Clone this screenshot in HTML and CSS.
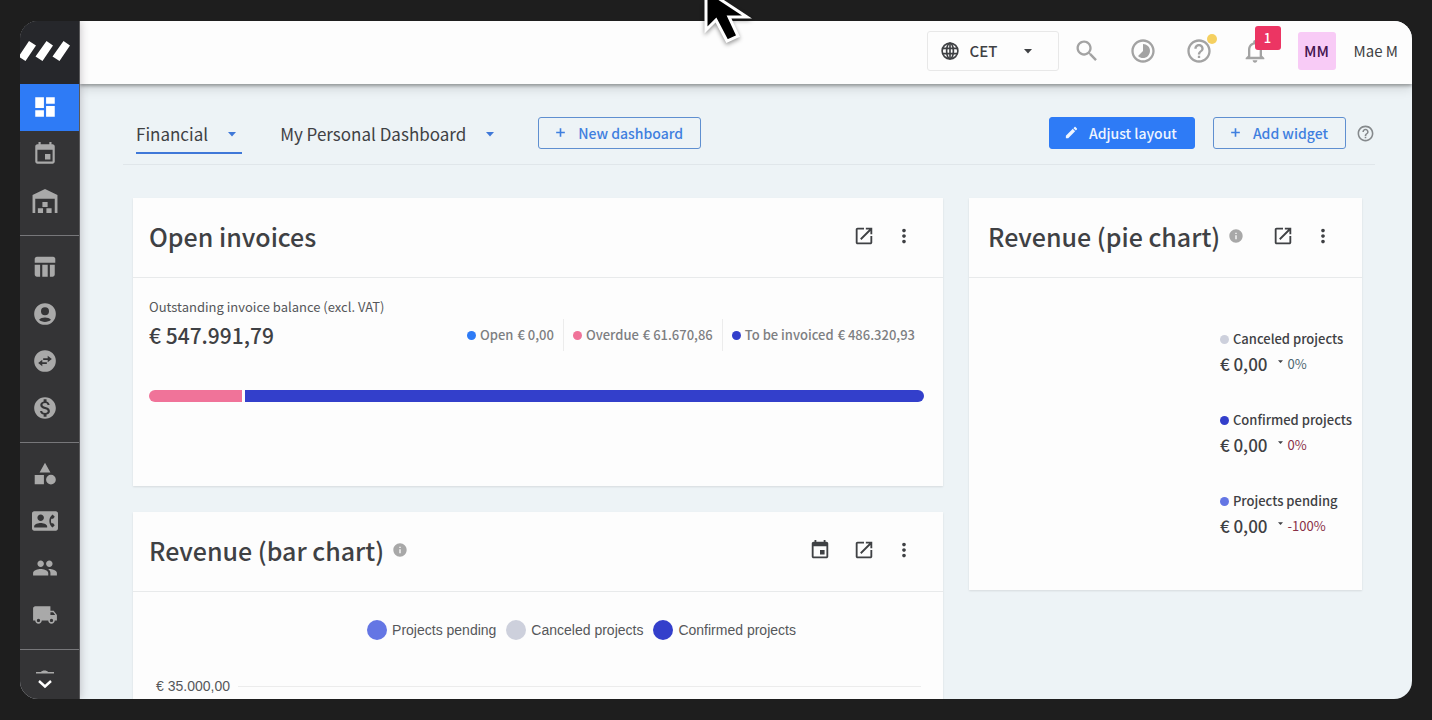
FILE: index.html
```html
<!DOCTYPE html>
<html lang="en">
<head>
    <meta charset="UTF-8">
    <meta name="viewport" content="width=device-width, initial-scale=1.0">
    <title>Dashboard</title>
    <link rel="stylesheet" href="styles.css">
</head>
<body>
    <!-- Icon sprite -->
    <svg class="sprite" aria-hidden="true">
        <symbol id="i-dashboard" viewBox="0 0 24 24"><path d="M3 13h8V3H3v10zm0 8h8v-6H3v6zm10 0h8V11h-8v10zm0-18v6h8V3h-8z"/></symbol>
        <symbol id="i-event" viewBox="0 0 24 24"><path d="M17 12h-5v5h5v-5zM16 1v2H8V1H6v2H5c-1.11 0-1.99.9-1.99 2L3 19c0 1.1.89 2 2 2h14c1.1 0 2-.9 2-2V5c0-1.1-.9-2-2-2h-1V1h-2zm3 18H5V8h14v11z"/></symbol>
        <symbol id="i-warehouse" viewBox="0 0 24 24"><path d="M.5 23V6.500L12 1l11.500 5.500V23H21V10H3v13zM9.600 13h4.800v4.600H9.600zM5.400 18.700h4.800V23H5.400zM13.300 18.700h4.800V23h-4.800z"/></symbol>
        <symbol id="i-table" viewBox="0 0 24 24"><path d="M9.500 10h5v11h-5zM16.500 21H19c1.100 0 2-.9 2-2v-9h-4.500zM19.500 2.500h-15C3.400 2.500 2.500 3.400 2.500 4.500V8h19V4.500c0-1.100-.9-2-2-2zM2.500 19c0 1.100.9 2 2 2h3V10h-5z"/></symbol>
        <symbol id="i-account" viewBox="0 0 24 24"><path fill-rule="evenodd" d="M12 2a10 10 0 1 0 0 20 10 10 0 0 0 0-20zm0 3.700a3.700 3.700 0 1 1 0 7.400 3.700 3.700 0 0 1 0-7.400zM6.500 17.400c1.200-1.400 3.300-2.200 5.500-2.200s4.300.8 5.500 2.200c-1.300 1.300-3.300 2-5.500 2s-4.200-.7-5.500-2z"/></symbol>
        <symbol id="i-swap" viewBox="0 0 24 24"><path fill-rule="evenodd" d="M12 2a10 10 0 1 0 0 20 10 10 0 0 0 0-20zm2.500 5.200 3.800 3-3.800 3V11h-4.200V9.400h4.200zM9.500 10.900v2.200h4.200v1.600H9.500v2.200l-3.800-3z"/></symbol>
        <symbol id="i-money" viewBox="0 0 24 24"><path d="M12 2C6.480 2 2 6.480 2 12s4.480 10 10 10 10-4.480 10-10S17.520 2 12 2zm1.410 16.090V20h-2.670v-1.930c-1.710-.36-3.160-1.460-3.270-3.400h1.960c.1 1.050.82 1.870 2.650 1.870 1.960 0 2.400-.98 2.400-1.590 0-.83-.44-1.610-2.670-2.140-2.480-.6-4.180-1.620-4.180-3.670 0-1.720 1.390-2.840 3.110-3.210V4h2.670v1.950c1.860.45 2.790 1.860 2.850 3.390H14.300c-.05-1.110-.64-1.870-2.220-1.870-1.500 0-2.400.68-2.400 1.640 0 .84.65 1.390 2.670 1.910s4.180 1.390 4.180 3.910c-.01 1.830-1.380 2.830-3.120 3.160z"/></symbol>
        <symbol id="i-category" viewBox="0 0 24 24"><path d="M12 1.500 17 10.500H7zM2.500 13h8.500v8.500H2.500zM17.500 12.700a4.500 4.500 0 1 0 0 9 4.500 4.500 0 0 0 0-9z"/></symbol>
        <symbol id="i-contact" viewBox="0 0 24 24"><path d="M22 3H2C.9 3 0 3.900 0 5v14c0 1.100.9 2 2 2h20c1.100 0 1.990-.9 1.990-2L24 5c0-1.100-.9-2-2-2zM8 6c1.660 0 3 1.340 3 3s-1.340 3-3 3-3-1.340-3-3 1.340-3 3-3zm6 12H2v-1c0-2 4-3.100 6-3.100s6 1.100 6 3.100v1zm3.850-4h1.640L21 16l-1.990 1.990c-1.310-.98-2.280-2.380-2.730-3.990-.18-.64-.28-1.310-.28-2s.1-1.360.28-2c.45-1.620 1.420-3.010 2.730-3.990L21 8l-1.510 2h-1.640c-.22.63-.35 1.300-.35 2s.13 1.370.35 2z"/></symbol>
        <symbol id="i-group" viewBox="0 0 24 24"><path d="M16 11c1.660 0 2.990-1.340 2.990-3S17.660 5 16 5c-1.660 0-3 1.340-3 3s1.340 3 3 3zm-8 0c1.660 0 2.990-1.340 2.990-3S9.660 5 8 5C6.340 5 5 6.340 5 8s1.340 3 3 3zm0 2c-2.330 0-7 1.170-7 3.500V19h14v-2.500c0-2.330-4.670-3.500-7-3.500zm8 0c-.29 0-.62.02-.97.05 1.160.84 1.970 1.970 1.970 3.450V19h6v-2.500c0-2.330-4.670-3.500-7-3.500z"/></symbol>
        <symbol id="i-truck" viewBox="0 0 24 24"><path d="M20 8h-3V4H3c-1.100 0-2 .9-2 2v11h2c0 1.660 1.340 3 3 3s3-1.340 3-3h6c0 1.660 1.340 3 3 3s3-1.340 3-3h2v-5l-3-4zM6 18.500c-.83 0-1.500-.67-1.500-1.500s.67-1.500 1.500-1.500 1.500.67 1.500 1.500-.67 1.500-1.500 1.500zm13.500-9l1.960 2.500H17V9.500h2.500zm-1.500 9c-.83 0-1.500-.67-1.500-1.500s.67-1.500 1.500-1.500 1.500.67 1.500 1.500-.67 1.500-1.500 1.500z"/></symbol>
        <symbol id="i-open" viewBox="0 0 24 24"><path d="M19 19H5V5h7V3H5c-1.110 0-2 .9-2 2v14c0 1.100.89 2 2 2h14c1.100 0 2-.9 2-2v-7h-2v7zM14 3v2h3.590l-9.830 9.830 1.410 1.410L19 6.410V10h2V3h-7z"/></symbol>
        <symbol id="i-more" viewBox="0 0 24 24"><path d="M12 8c1.100 0 2-.9 2-2s-.9-2-2-2-2 .9-2 2 .9 2 2 2zm0 2c-1.100 0-2 .9-2 2s.9 2 2 2 2-.9 2-2-.9-2-2-2zm0 6c-1.100 0-2 .9-2 2s.9 2 2 2 2-.9 2-2-.9-2-2-2z"/></symbol>
        <symbol id="i-info" viewBox="0 0 24 24"><path d="M12 2C6.480 2 2 6.480 2 12s4.480 10 10 10 10-4.480 10-10S17.520 2 12 2zm1 15h-2v-6h2v6zm0-8h-2V7h2v2z"/></symbol>
        <symbol id="i-globe" viewBox="0 0 24 24"><g fill="none" stroke="currentColor" stroke-width="2.200"><circle cx="12" cy="12" r="10.500"/><ellipse cx="12" cy="12" rx="4.500" ry="10.500"/><path d="M2.500 8.500h19M2.500 15.500h19M12 2v20"/></g></symbol>
        <symbol id="i-search" viewBox="0 0 24 24"><path d="M15.500 14h-.79l-.28-.27C15.410 12.590 16 11.110 16 9.500 16 5.910 13.090 3 9.500 3S3 5.910 3 9.500 5.910 16 9.500 16c1.610 0 3.090-.59 4.230-1.570l.27.28v.79l5 4.990L20.490 19l-4.990-5zm-6 0C7.010 14 5 11.990 5 9.500S7.010 5 9.500 5 14 7.010 14 9.500 11.990 14 9.500 14z"/></symbol>
        <symbol id="i-timelapse" viewBox="0 0 24 24"><path d="M16.240 7.760C15.070 6.590 13.540 6 12 6v6l-4.240 4.240c2.340 2.340 6.140 2.340 8.490 0 2.340-2.340 2.340-6.140-.01-8.480zM12 2C6.480 2 2 6.480 2 12s4.480 10 10 10 10-4.480 10-10S17.520 2 12 2zm0 18c-4.420 0-8-3.580-8-8s3.580-8 8-8 8 3.580 8 8-3.580 8-8 8z"/></symbol>
        <symbol id="i-help" viewBox="0 0 24 24"><path d="M11 18h2v-2h-2v2zm1-16C6.480 2 2 6.480 2 12s4.480 10 10 10 10-4.480 10-10S17.520 2 12 2zm0 18c-4.410 0-8-3.590-8-8s3.590-8 8-8 8 3.590 8 8-3.590 8-8 8zm0-14c-2.210 0-4 1.790-4 4h2c0-1.100.9-2 2-2s2 .9 2 2c0 2-3 1.750-3 5h2c0-2.250 3-2.500 3-5 0-2.210-1.790-4-4-4z"/></symbol>
        <symbol id="i-bell" viewBox="0 0 24 24"><path d="M12 22c1.100 0 2-.9 2-2h-4c0 1.100.9 2 2 2zm6-6v-5c0-3.070-1.630-5.640-4.500-6.320V4c0-.83-.67-1.500-1.500-1.500s-1.500.67-1.500 1.500v.68C7.640 5.360 6 7.920 6 11v5l-2 2v1h16v-1l-2-2zm-2 1H8v-6c0-2.480 1.510-4.500 4-4.500s4 2.020 4 4.500v6z"/></symbol>
        <symbol id="i-edit" viewBox="0 0 24 24"><path d="M3 17.250V21h3.750L17.810 9.940l-3.750-3.750L3 17.250zM20.710 7.040c.39-.39.39-1.020 0-1.410l-2.340-2.340c-.39-.39-1.020-.39-1.410 0l-1.830 1.830 3.750 3.750 1.830-1.830z"/></symbol>
        <symbol id="i-plus" viewBox="0 0 24 24"><path d="M20 13.500h-6.500V20h-3v-6.500H4v-3h6.500V4h3v6.500H20z"/></symbol>
        <symbol id="i-caret" viewBox="0 0 8 8"><path d="M0 2h8L4 6.500z"/></symbol>
    </svg>

    <div class="app">
        <nav class="sidebar" aria-label="Main">
            <a href="#" class="logo" aria-label="Home">
                <svg viewBox="0 0 60 63"><path fill="#fff" d="M-1 35 9 20l7 4.500L5.500 40-1 36zM15.500 35.500 26.500 20l6.500 4.500L22.500 40zM32.500 35.500 43.500 20l6.500 4.500L39.500 40z"/></svg>
            </a>
            <div class="nav-group">
                <a href="#" class="nav-item active" aria-label="Dashboard"><svg class="icon"><use href="#i-dashboard"/></svg></a>
                <a href="#" class="nav-item" aria-label="Calendar"><svg class="icon"><use href="#i-event"/></svg></a>
                <a href="#" class="nav-item" aria-label="Warehouse"><svg class="icon"><use href="#i-warehouse"/></svg></a>
            </div>
            <div class="nav-group">
                <a href="#" class="nav-item" aria-label="Projects"><svg class="icon"><use href="#i-table"/></svg></a>
                <a href="#" class="nav-item" aria-label="Account"><svg class="icon"><use href="#i-account"/></svg></a>
                <a href="#" class="nav-item" aria-label="Subrent"><svg class="icon"><use href="#i-swap"/></svg></a>
                <a href="#" class="nav-item" aria-label="Invoices"><svg class="icon"><use href="#i-money"/></svg></a>
            </div>
            <div class="nav-group">
                <a href="#" class="nav-item" aria-label="Equipment"><svg class="icon"><use href="#i-category"/></svg></a>
                <a href="#" class="nav-item" aria-label="Contacts"><svg class="icon"><use href="#i-contact"/></svg></a>
                <a href="#" class="nav-item" aria-label="Crew"><svg class="icon"><use href="#i-group"/></svg></a>
                <a href="#" class="nav-item" aria-label="Vehicles"><svg class="icon"><use href="#i-truck"/></svg></a>
            </div>
            <button class="nav-more" aria-label="Scroll down">
                <svg viewBox="0 0 20 20"><path fill="#a9a9a9" d="M1 4.500V3h5c1-2 6-2 7 0h6v1.500z"/><path fill="none" stroke="#fff" stroke-width="2.400" d="m4 12 6 5.500 6-5.500"/></svg>
            </button>
        </nav>

        <div class="main">
            <header class="topbar">
                <label class="timezone">
                    <svg class="globe"><use href="#i-globe"/></svg>
                    <select aria-label="Timezone">
                        <option>CET</option>
                    </select>
                    <svg class="caret"><use href="#i-caret"/></svg>
                </label>
                <div class="tools">
                    <button class="tool" aria-label="Search"><svg><use href="#i-search"/></svg></button>
                    <button class="tool" aria-label="Time tracking"><svg><use href="#i-timelapse"/></svg></button>
                    <button class="tool" aria-label="Help"><svg><use href="#i-help"/></svg><span class="dot-new"></span></button>
                    <button class="tool" aria-label="Notifications"><svg><use href="#i-bell"/></svg><span class="badge">1</span></button>
                </div>
                <span class="avatar">MM</span>
                <span class="username">Mae M</span>
            </header>

            <div class="tabs">
                <a href="#" class="tab current">Financial <svg class="caret"><use href="#i-caret"/></svg></a>
                <a href="#" class="tab">My Personal Dashboard <svg class="caret"><use href="#i-caret"/></svg></a>
                <button class="btn"><svg class="plus"><use href="#i-plus"/></svg>New dashboard</button>
                <div class="tab-actions">
                    <button class="btn primary"><svg><use href="#i-edit"/></svg>Adjust layout</button>
                    <button class="btn"><svg class="plus"><use href="#i-plus"/></svg>Add widget</button>
                    <button class="help" aria-label="Help"><svg><use href="#i-help"/></svg></button>
                </div>
            </div>

            <main class="board">
                <div class="column">
                    <section class="card invoices">
                        <div class="card-header">
                            <h2>Open invoices</h2>
                            <div class="card-actions">
                                <button aria-label="Open"><svg><use href="#i-open"/></svg></button>
                                <button class="more" aria-label="More"><svg><use href="#i-more"/></svg></button>
                            </div>
                        </div>
                        <div class="card-body">
                            <div class="label">Outstanding invoice balance (excl. VAT)</div>
                            <div class="balance">
                                <div class="amount">€ 547.991,79</div>
                                <ul class="totals">
                                    <li><span class="dot open"></span>Open<span>€ 0,00</span></li>
                                    <li><span class="dot overdue"></span>Overdue<span>€ 61.670,86</span></li>
                                    <li><span class="dot confirmed"></span>To be invoiced<span>€ 486.320,93</span></li>
                                </ul>
                            </div>
                            <div class="bar">
                                <div class="bar-overdue" style="width: 12%"></div>
                                <div class="bar-invoice"></div>
                            </div>
                        </div>
                    </section>

                    <section class="card">
                        <div class="card-header">
                            <h2>Revenue (bar chart)</h2>
                            <svg class="info"><use href="#i-info"/></svg>
                            <div class="card-actions">
                                <button aria-label="Period"><svg><use href="#i-event"/></svg></button>
                                <button aria-label="Open"><svg><use href="#i-open"/></svg></button>
                                <button class="more" aria-label="More"><svg><use href="#i-more"/></svg></button>
                            </div>
                        </div>
                        <div class="chart">
                            <ul class="chart-legend">
                                <li><span class="pending"></span>Projects pending</li>
                                <li><span class="canceled"></span>Canceled projects</li>
                                <li><span class="confirmed"></span>Confirmed projects</li>
                            </ul>
                            <div class="axis-row">€ 35.000,00</div>
                        </div>
                    </section>
                </div>

                <section class="card pie">
                    <div class="card-header">
                        <h2>Revenue (pie chart)</h2>
                        <svg class="info"><use href="#i-info"/></svg>
                        <div class="card-actions">
                            <button aria-label="Open"><svg><use href="#i-open"/></svg></button>
                            <button class="more" aria-label="More"><svg><use href="#i-more"/></svg></button>
                        </div>
                    </div>
                    <ul class="pie-legend">
                        <li>
                            <div class="name"><span class="dot canceled"></span>Canceled projects</div>
                            <div class="value">€ 0,00 <svg><use href="#i-caret"/></svg><span class="same">0%</span></div>
                        </li>
                        <li>
                            <div class="name"><span class="dot confirmed"></span>Confirmed projects</div>
                            <div class="value">€ 0,00 <svg><use href="#i-caret"/></svg><span class="down">0%</span></div>
                        </li>
                        <li>
                            <div class="name"><span class="dot pending"></span>Projects pending</div>
                            <div class="value">€ 0,00 <svg><use href="#i-caret"/></svg><span class="down">-100%</span></div>
                        </li>
                    </ul>
                </section>
            </main>
        </div>
    </div>

    <svg class="cursor" viewBox="0 0 56 56" aria-hidden="true"><path d="M6-10v40l10-10 11 21 11-5-9-19h18z"/></svg>
</body>
</html>
```

FILE: styles.css
```css
* {
    box-sizing: border-box;
}

body {
    margin: 0;
    padding: 21px 20px;
    height: 100vh;
    overflow: hidden;
    position: relative;
    background: #1e1e1e;
    color: #3f4144;
    font-family: "Noto Sans CJK JP", "Noto Sans", sans-serif;
    font-size: 14px;
    line-height: 20px;
}

button, select {
    font: inherit;
    color: inherit;
    background: none;
    border: 0;
    padding: 0;
    cursor: pointer;
}

a {
    color: inherit;
    text-decoration: none;
}

ul {
    list-style: none;
    margin: 0;
    padding: 0;
}

svg {
    display: block;
    fill: currentColor;
    flex: none;
}

.sprite {
    position: absolute;
    width: 0;
    height: 0;
}

.app {
    display: flex;
    height: 100%;
    border-radius: 18px;
    overflow: hidden;
    background: #edf3f6;
}

/* Sidebar */
.sidebar {
    width: 60px;
    flex: none;
    background: #343436;
    color: #a9a9a9;
    border-right: 1px solid #58585a;
    box-shadow: 0 0 9px rgba(60, 50, 60, 0.3);
    z-index: 2;
}

.logo {
    display: block;
    height: 63px;
    background: #26272b;
}

.logo svg {
    width: 60px;
    height: 63px;
}

.nav-group {
    padding: 8px 0 10px;
    border-bottom: 1px solid #77777a;
}

.logo + .nav-group {
    padding-top: 0;
}

.nav-item {
    display: flex;
    align-items: center;
    justify-content: center;
    height: 47px;
    padding: 0 9px 2px 0;
}

.nav-item.active {
    background: #2e7bf6;
    color: #fff;
}

.icon {
    width: 26px;
    height: 26px;
}

.nav-more {
    display: block;
    width: 100%;
    padding: 19px 15px;
}

.nav-more svg {
    width: 20px;
    height: 20px;
}

/* Top bar */
.main {
    flex: 1;
    min-width: 0;
}

.topbar {
    display: flex;
    align-items: center;
    justify-content: flex-end;
    height: 63px;
    padding-right: 14px;
    padding-bottom: 4px;
    background: #fdfdfd;
    box-shadow: 0 2px 3px rgba(0, 0, 0, 0.3), 0 5px 10px rgba(0, 0, 0, 0.12);
}

.timezone {
    position: relative;
    display: flex;
    align-items: center;
    width: 132px;
    height: 40px;
    border: 1px solid #e8e8e8;
    border-radius: 3px;
}

.timezone select {
    appearance: none;
    width: 100%;
    height: 100%;
    padding-left: 42px;
    font-size: 15px;
    font-weight: 500;
}

.timezone svg {
    position: absolute;
    pointer-events: none;
}

.globe {
    left: 13px;
    width: 18px;
    height: 18px;
}

.caret {
    width: 8px;
    height: 8px;
}

.timezone .caret {
    right: 26px;
}

.tools {
    display: flex;
    gap: 28px;
    margin: 0 29px 0 14px;
    color: #a3a3a3;
}

.tool {
    position: relative;
}

.tool svg {
    width: 28px;
    height: 28px;
}

.dot-new {
    position: absolute;
    top: -3px;
    right: -4px;
    width: 10px;
    height: 10px;
    border-radius: 50%;
    background: #f5d060;
}

.badge {
    position: absolute;
    top: -11px;
    left: 14px;
    width: 26px;
    height: 24px;
    border-radius: 3px;
    background: #ec3563;
    color: #fff;
    font-size: 13px;
    font-weight: 500;
    line-height: 24px;
}

.avatar {
    width: 38px;
    height: 38px;
    border-radius: 3px;
    background: #f8cbf6;
    color: #43154f;
    font-size: 15px;
    font-weight: 500;
    line-height: 38px;
    text-align: center;
}

.username {
    margin-left: 18px;
    font-size: 15px;
}

/* Dashboard tabs */
.tabs {
    display: flex;
    align-items: center;
    height: 81px;
    margin: 0 37px 0 43px;
    padding: 18px 0 0 13px;
    border-bottom: 1px solid #e0e6ea;
}

.tab {
    display: flex;
    align-items: center;
    gap: 20px;
    margin-right: 38px;
    padding: 9px 6px 6px 0;
    border-bottom: 2px solid transparent;
    font-size: 17px;
    line-height: 24px;
}

.tab.current {
    border-color: #3f78d8;
}

.tab .caret {
    color: #3f78d8;
}

.btn {
    display: flex;
    align-items: center;
    gap: 10px;
    height: 32px;
    padding: 0 17px 1px 14px;
    border: 1px solid #5f8fd0;
    border-radius: 3px;
    color: #3f7fdf;
    font-size: 14px;
    font-weight: 500;
}

.btn svg {
    width: 15px;
    height: 15px;
}

.btn .plus {
    padding: 1px;
}

.btn.primary {
    background: #2e7bf6;
    border-color: #2e7bf6;
    color: #eef5ff;
}

.tab-actions {
    display: flex;
    align-items: center;
    gap: 18px;
    margin-left: auto;
}

.help {
    margin-left: -8px;
    color: #85898c;
}

.help svg {
    width: 19px;
    height: 19px;
}

/* Widgets */
.board {
    display: grid;
    grid-template-columns: 810fr 393fr;
    gap: 26px;
    align-items: start;
    padding: 33px 50px 0 53px;
}

.column {
    display: grid;
    gap: 26px;
}

.card {
    background: #fdfdfd;
    box-shadow: 0 1px 2px rgba(0, 0, 0, 0.1);
}

.card-header {
    display: flex;
    align-items: center;
    height: 80px;
    padding: 0 28px 4px 16px;
    border-bottom: 1px solid #e8eaeb;
}

h2 {
    margin: 0;
    font-size: 25px;
    font-weight: 500;
    line-height: 32px;
}

.info {
    width: 16px;
    height: 16px;
    margin-left: 8px;
    color: #a8a8a8;
}

.card-actions {
    display: flex;
    gap: 22px;
    margin-left: auto;
}

.card-actions svg {
    width: 22px;
    height: 22px;
}

.card-actions .more {
    margin-left: -4px;
}

.invoices {
    min-height: 288px;
}

.card-body {
    padding: 19px 19px 0 16px;
}

.label {
    color: #55575a;
    font-size: 13px;
}

.balance {
    display: flex;
    justify-content: space-between;
    align-items: center;
    height: 36px;
}

.amount {
    font-size: 21px;
    font-weight: 500;
}

.totals {
    display: flex;
    color: #7d7f82;
    font-size: 13px;
    font-weight: 500;
}

.totals li {
    display: flex;
    align-items: center;
    gap: 4px;
    padding: 6px 9px;
}

.totals li + li {
    border-left: 1px solid #ececec;
}

.dot {
    width: 9px;
    height: 9px;
    flex: none;
    border-radius: 50%;
}

.open {
    background: #2e7bf6;
}

.overdue, .bar-overdue {
    background: #f07399;
}

.confirmed, .bar-invoice {
    background: #333fcb;
}

.canceled {
    background: #cdd0dc;
}

.pending {
    background: #6476e4;
}

.bar {
    display: flex;
    gap: 3px;
    height: 12px;
    margin-top: 37px;
    border-radius: 6px;
    overflow: hidden;
}

.bar-invoice {
    flex: 1;
}

/* Bar chart */
.chart {
    padding: 28px 22px 24px 23px;
    color: #55575a;
    font-family: "Liberation Sans", Arial, sans-serif;
}

.chart-legend {
    display: flex;
    justify-content: center;
    gap: 10px;
    padding-left: 86px;
}

.chart-legend li {
    display: flex;
    align-items: center;
    gap: 5px;
}

.chart-legend span {
    width: 20px;
    height: 20px;
    border-radius: 50%;
}

.axis-row {
    display: flex;
    align-items: center;
    gap: 8px;
    margin-top: 36px;
}

.axis-row::after {
    content: "";
    flex: 1;
    border-top: 1px solid #ececec;
}

/* Pie chart */
.pie {
    min-height: 392px;
}

.pie .card-header {
    padding-left: 19px;
}

.pie-legend {
    width: fit-content;
    margin-left: auto;
    padding: 51px 10px 0 0;
}

.pie-legend li {
    height: 81px;
}

.name {
    display: flex;
    align-items: center;
    gap: 4px;
    font-size: 13px;
    font-weight: 500;
}

.value {
    display: flex;
    align-items: center;
    margin-top: 5px;
    font-size: 17px;
    font-weight: 500;
}

.value svg {
    width: 5px;
    height: 5px;
    margin: 0 5px 6px 10px;
}

.value span {
    font-size: 13px;
    font-weight: 400;
}

.same {
    color: #4d6670;
}

.down {
    color: #8a3048;
}

.cursor {
    position: absolute;
    top: 0;
    left: 700px;
    width: 56px;
    height: 56px;
    fill: #000;
    stroke: #fff;
    stroke-width: 3px;
    filter: drop-shadow(0 2px 2px rgba(0, 0, 0, 0.4));
    z-index: 3;
}
```
